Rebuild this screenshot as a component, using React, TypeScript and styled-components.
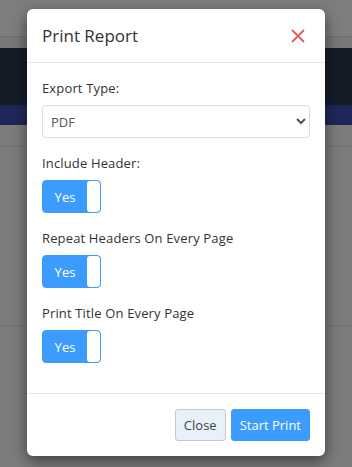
import React from "react";
import styled, { createGlobalStyle } from "styled-components";

const GlobalStyle = createGlobalStyle`
  html, body { margin: 0; padding: 0; }
  body {
    font-family: "Open Sans", "Noto Sans", Arial, sans-serif;
    background: #f8f8f8;
  }
  * { box-sizing: border-box; }
`;

const Page = styled.div`
  position: relative;
  width: 352px;
  height: 467px;
  overflow: hidden;
  display: flex;
  flex-direction: column;
  background: #f8f8f8;
`;

const TopBar = styled.div`
  height: 37px;
  background: #fdfdfd;
  border-bottom: 1px solid #e2e2e2;
`;

const SubBar = styled.div`
  height: 11px;
  background: #f0f0f0;
`;

const NavBar = styled.div`
  height: 57px;
  background: #2a3850;
`;

const AccentBar = styled.div`
  height: 20px;
  background: #3e4eb4;
`;

const ToolBar = styled.div`
  height: 22px;
  background: #f8f8f8;
  border-bottom: 1px solid #e0e0e0;
`;

const ContentBlock = styled.div`
  height: 179px;
  border-bottom: 1px solid #e0e0e0;
`;

const Backdrop = styled.div`
  position: absolute;
  inset: 0;
  background: rgba(0, 0, 0, 0.5);
  display: flex;
  justify-content: center;
  align-items: flex-start;
  padding-top: 9px;
`;

const Modal = styled.div`
  width: 298px;
  background: #fff;
  border-radius: 6px;
  box-shadow: 0 5px 15px rgba(0, 0, 0, 0.5);
  display: flex;
  flex-direction: column;
`;

const Header = styled.div`
  display: flex;
  align-items: center;
  justify-content: space-between;
  padding: 15px 15px;
  border-bottom: 1px solid #e5e5e5;
`;

const Title = styled.h4`
  margin: 0;
  font-size: 17px;
  line-height: 23px;
  font-weight: 400;
  color: #333;
`;

const CloseIcon = styled.button`
  border: 0;
  background: transparent;
  padding: 0;
  margin-right: 5px;
  width: 14px;
  height: 14px;
  display: flex;
  cursor: pointer;
`;

const Body = styled.div`
  padding: 15px;
  display: flex;
  flex-direction: column;
`;

const Group = styled.div`
  display: flex;
  flex-direction: column;
  align-items: flex-start;
  margin-bottom: 15px;
`;

const Label = styled.label`
  font-size: 13px;
  line-height: 20px;
  font-weight: 400;
  letter-spacing: 0.15px;
  color: #333;
  margin-bottom: 7px;
`;

const Select = styled.select`
  width: 100%;
  height: 33px;
  border: 1px solid #dcdcdc;
  border-radius: 4px;
  padding: 0 4px;
  font-family: "Open Sans", Arial, sans-serif;
  font-size: 13px;
  color: #555;
  background: #fff;
`;

const Toggle = styled.div`
  width: 59px;
  height: 33px;
  display: flex;
  border: 1px solid #3c9cfd;
  border-radius: 4px;
  background: #3c9cfd;
  overflow: hidden;
`;

const ToggleOn = styled.span`
  flex: 1;
  display: flex;
  align-items: center;
  justify-content: center;
  color: #fff;
  font-size: 13px;
`;

const ToggleHandle = styled.span`
  width: 13px;
  background: #fff;
  border-radius: 3px;
`;

const Footer = styled.div`
  display: flex;
  justify-content: flex-end;
  gap: 5px;
  padding: 15px;
  border-top: 1px solid #e5e5e5;
`;

const Button = styled.button<{ $primary?: boolean }>`
  height: 32px;
  padding: 0 8px;
  border-radius: 3px;
  font-family: "Open Sans", Arial, sans-serif;
  font-size: 13px;
  cursor: pointer;
  border: 1px solid ${(p) => (p.$primary ? "#3c9cfd" : "#c6cacf")};
  background: ${(p) => (p.$primary ? "#3c9cfd" : "#e7f1fb")};
  color: ${(p) => (p.$primary ? "#fff" : "#444")};
`;

const toggles = [
  "Include Header:",
  "Repeat Headers On Every Page",
  "Print Title On Every Page",
];

export default function App() {
  return (
    <>
      <GlobalStyle />
      <Page>
        <TopBar />
        <SubBar />
        <NavBar />
        <AccentBar />
        <ToolBar />
        <ContentBlock />
        <Backdrop>
          <Modal>
            <Header>
              <Title>Print Report</Title>
              <CloseIcon aria-label="Close">
                <svg width="14" height="14" viewBox="0 0 14 14">
                  <path
                    d="M1 1 L13 13 M13 1 L1 13"
                    stroke="#e25c5c"
                    strokeWidth="1.8"
                    fill="none"
                  />
                </svg>
              </CloseIcon>
            </Header>
            <Body>
              <Group>
                <Label>Export Type:</Label>
                <Select defaultValue="PDF">
                  <option value="PDF">PDF</option>
                  <option value="Excel">Excel</option>
                  <option value="CSV">CSV</option>
                </Select>
              </Group>
              {toggles.map((t) => (
                <Group key={t}>
                  <Label>{t}</Label>
                  <Toggle>
                    <ToggleOn>Yes</ToggleOn>
                    <ToggleHandle />
                  </Toggle>
                </Group>
              ))}
            </Body>
            <Footer>
              <Button>Close</Button>
              <Button $primary>Start Print</Button>
            </Footer>
          </Modal>
        </Backdrop>
      </Page>
    </>
  );
}
